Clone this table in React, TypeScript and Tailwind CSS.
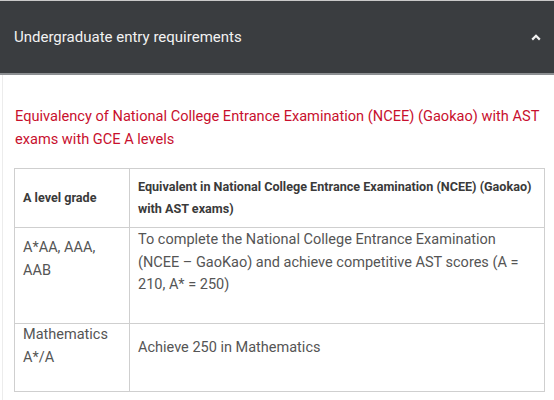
const rows = [
  {
    grade: ["A*AA, AAA,", "AAB"],
    req: "To complete the National College Entrance Examination (NCEE – GaoKao) and achieve competitive AST scores (A = 210, A* = 250)",
    h: "h-[96px]",
    gradePad: "pt-[9px]",
    reqPad: "pt-[1px]",
  },
  {
    grade: ["Mathematics", "A*/A"],
    req: "Achieve 250 in Mathematics",
    h: "h-[68px]",
    gradePad: "pt-0",
    reqPad: "pt-[13px]",
  },
];

const App = () => {
  return (
    <div className="w-[554px] h-[400px] overflow-hidden bg-white font-['Roboto',sans-serif]">
      <div className="flex flex-row justify-between items-center h-[75px] bg-[#3a3d40] border-t border-[#c9c9c9] border-b-2 border-b-[#8c8f92] pl-[14px] pr-[13px]">
        <p className="text-[15px] text-[#f2f2f2] mt-[1px]">Undergraduate entry requirements</p>
        <svg width="10" height="7" viewBox="0 0 10 7" className="mt-[1px]">
          <path d="M1.2 5.6 L5 1.8 L8.8 5.6" fill="none" stroke="#f2f2f2" strokeWidth="2.2" />
        </svg>
      </div>
      <div className="ml-[2px] border-l border-[#ececec] h-full pl-[11px] pr-[8px] pt-[30px]">
        <h3 className="text-[14.6px] leading-[23px] text-[#c8102e] pl-[1px]">
          Equivalency of National College Entrance Examination (NCEE) (Gaokao) with AST exams with GCE A levels
        </h3>
        <table className="mt-[17px] w-[531px] border-collapse table-fixed text-[#555]">
          <colgroup>
            <col className="w-[115px]" />
            <col />
          </colgroup>
          <thead>
            <tr className="h-[59px]">
              <th className="border border-[#cfcfcf] text-left align-middle px-[8px] text-[12.6px] leading-[22px] font-bold text-[#3a3a3a]">
                A level grade
              </th>
              <th className="border border-[#cfcfcf] text-left align-middle px-[8px] text-[12.6px] leading-[22px] font-bold text-[#3a3a3a]">
                Equivalent in National College Entrance Examination (NCEE) (Gaokao) with AST exams)
              </th>
            </tr>
          </thead>
          <tbody>
            {rows.map((r) => (
              <tr key={r.req} className={r.h}>
                <td className={`border border-[#cfcfcf] align-top px-[8px] text-[14.5px] leading-[22.5px] ${r.gradePad}`}>
                  {r.grade.map((g) => (
                    <div key={g}>{g}</div>
                  ))}
                </td>
                <td className={`border border-[#cfcfcf] align-top pl-[8px] pr-[14px] text-[14.5px] leading-[22.5px] ${r.reqPad}`}>
                  {r.req}
                </td>
              </tr>
            ))}
          </tbody>
        </table>
      </div>
    </div>
  );
};

export default App;
